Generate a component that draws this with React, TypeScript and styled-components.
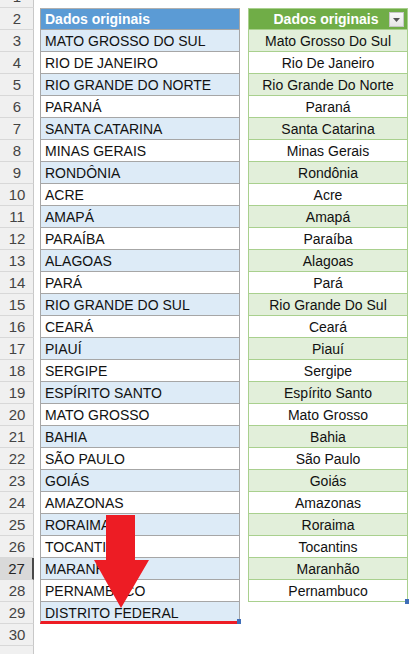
import styled, { createGlobalStyle } from "styled-components";

const states: [string, string | null][] = [
  ["MATO GROSSO DO SUL", "Mato Grosso Do Sul"],
  ["RIO DE JANEIRO", "Rio De Janeiro"],
  ["RIO GRANDE DO NORTE", "Rio Grande Do Norte"],
  ["PARANÁ", "Paraná"],
  ["SANTA CATARINA", "Santa Catarina"],
  ["MINAS GERAIS", "Minas Gerais"],
  ["RONDÔNIA", "Rondônia"],
  ["ACRE", "Acre"],
  ["AMAPÁ", "Amapá"],
  ["PARAÍBA", "Paraíba"],
  ["ALAGOAS", "Alagoas"],
  ["PARÁ", "Pará"],
  ["RIO GRANDE DO SUL", "Rio Grande Do Sul"],
  ["CEARÁ", "Ceará"],
  ["PIAUÍ", "Piauí"],
  ["SERGIPE", "Sergipe"],
  ["ESPÍRITO SANTO", "Espírito Santo"],
  ["MATO GROSSO", "Mato Grosso"],
  ["BAHIA", "Bahia"],
  ["SÃO PAULO", "São Paulo"],
  ["GOIÁS", "Goiás"],
  ["AMAZONAS", "Amazonas"],
  ["RORAIMA", "Roraima"],
  ["TOCANTINS", "Tocantins"],
  ["MARANHÃO", "Maranhão"],
  ["PERNAMBUCO", "Pernambuco"],
  ["DISTRITO FEDERAL", null],
];

const SELECTED_ROW = 27;

export default function App() {
  return (
    <>
      <Global />
      <Viewport>
        <Sheet>
          <Row>
            <RowHead>1</RowHead>
          </Row>
          <Row>
            <RowHead>2</RowHead>
            <Gap />
            <BlueHead>Dados originais</BlueHead>
            <Gap />
            <GreenHead>
              Dados originais
              <FilterBtn>
                <svg width="7" height="4" viewBox="0 0 7 4">
                  <path d="M0 0h7L3.5 4z" fill="#555" />
                </svg>
              </FilterBtn>
            </GreenHead>
          </Row>
          {states.map(([upper, title], i) => {
            const n = i + 3;
            const last = i === states.length - 1;
            return (
              <Row key={n}>
                <RowHead $selected={n === SELECTED_ROW}>{n}</RowHead>
                <Gap />
                <BlueCell $alt={i % 2 === 0} $last={last}>
                  {upper}
                  {last && <Handle />}
                </BlueCell>
                <Gap />
                {title ? (
                  <GreenCell $alt={i % 2 === 0}>
                    {title}
                    {i === states.length - 2 && <Handle />}
                  </GreenCell>
                ) : (
                  <div />
                )}
              </Row>
            );
          })}
          <Row>
            <RowHead>30</RowHead>
          </Row>
          <Row>
            <RowHead />
          </Row>
        </Sheet>
        <Arrow width="56" height="94" viewBox="0 0 56 94">
          <path d="M12 0H41V45H55L27 93L0 45H12Z" fill="#ed1c24" />
        </Arrow>
      </Viewport>
    </>
  );
}

const Global = createGlobalStyle`
  html, body { margin: 0; padding: 0; background: #fff; }
  body { font-family: "Liberation Sans", Arial, sans-serif; }
`;

const Viewport = styled.div`
  position: relative;
  width: 416px;
  height: 654px;
  overflow: hidden;
  background: #fff;
`;

/* view is scrolled so only the bottom of row 1 shows */
const Sheet = styled.div`
  margin-top: -14px;
  display: flex;
  flex-direction: column;
`;

const Row = styled.div`
  display: grid;
  grid-template-columns: 34px 6px 200px 8px 160px 1fr;
  height: 22px;
`;

const RowHead = styled.div<{ $selected?: boolean }>`
  box-sizing: border-box;
  display: flex;
  align-items: center;
  justify-content: center;
  background: ${(p) => (p.$selected ? "#d9d9d9" : "#f0f0f0")};
  border-bottom: 1px solid #d8d8d8;
  border-right: ${(p) => (p.$selected ? "2px solid #4a4a4a" : "1px solid #c8c8c8")};
  color: ${(p) => (p.$selected ? "#262626" : "#444")};
  font-size: 15px;
  padding-left: 1px;
`;

const Gap = styled.div``;

const cellBase = `
  position: relative;
  box-sizing: border-box;
  display: flex;
  align-items: center;
  font-size: 14px;
  white-space: nowrap;
  overflow: hidden;
  color: #111;
`;

const BlueHead = styled.div`
  ${cellBase}
  background: #5b9bd5;
  color: #fff;
  font-weight: bold;
  padding-left: 4px;
  border: 1px solid #a6a6a6;
  border-top-color: #b0b0b0;
`;

const BlueCell = styled.div<{ $alt: boolean; $last: boolean }>`
  ${cellBase}
  overflow: visible;
  padding-left: 4px;
  background: ${(p) => (p.$alt ? "#ddebf7" : "#fff")};
  border-left: 1px solid #a6a6a6;
  border-right: 1px solid #a6a6a6;
  border-bottom: ${(p) => (p.$last ? "3px solid #ed1c24" : "1px solid #a6a6a6")};
  padding-top: ${(p) => (p.$last ? "2px" : "0")};
`;

const GreenHead = styled.div`
  ${cellBase}
  justify-content: center;
  background: #70ad47;
  color: #fff;
  font-weight: bold;
  border: 1px solid #a9d08e;
  padding-right: 4px;
`;

const GreenCell = styled.div<{ $alt: boolean }>`
  ${cellBase}
  overflow: visible;
  justify-content: center;
  background: ${(p) => (p.$alt ? "#e2efda" : "#fff")};
  border-left: 1px solid #a9d08e;
  border-right: 1px solid #a9d08e;
  border-bottom: 1px solid #a9d08e;
`;

const FilterBtn = styled.div`
  position: absolute;
  right: 3px;
  top: 3px;
  width: 15px;
  height: 15px;
  box-sizing: border-box;
  background: linear-gradient(#fafafa, #e6e6e6);
  border: 1px solid #c6c6c6;
  display: flex;
  align-items: center;
  justify-content: center;
`;

const Handle = styled.span`
  position: absolute;
  right: -2px;
  bottom: -3px;
  width: 4px;
  height: 5px;
  background: #3f6eb8;
`;

const Arrow = styled.svg`
  position: absolute;
  left: 94px;
  top: 515px;
`;
